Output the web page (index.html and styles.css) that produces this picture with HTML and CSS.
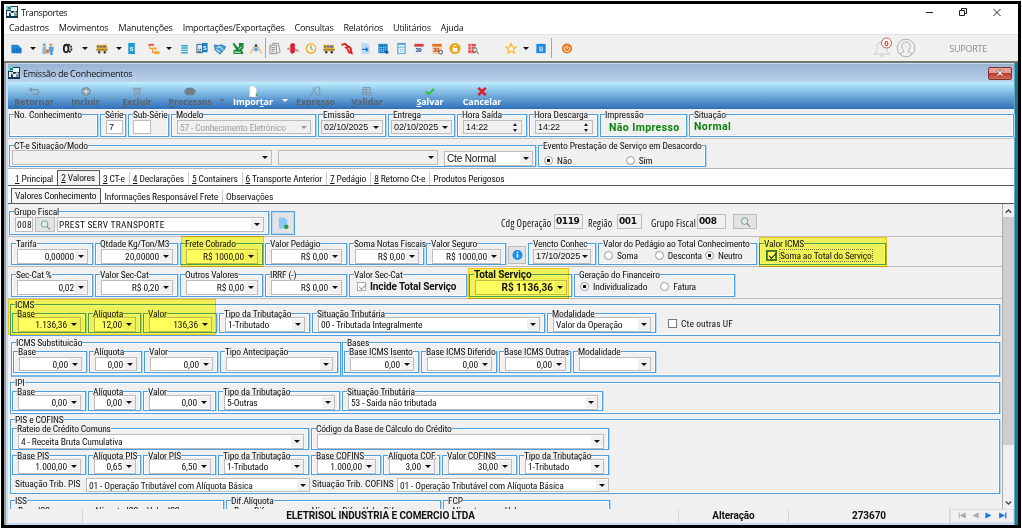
FILE: index.html
```
<!DOCTYPE html>
<html lang="pt-BR">
<head>
    <meta charset="UTF-8">
    <meta name="viewport" content="width=device-width, initial-scale=1.0">
    <title>Transportes</title>
    <link rel="stylesheet" href="styles.css">
</head>
<body>
<svg class="defs" width="0" height="0">
    <symbol id="app" viewBox="0 0 12 12"><path fill="#12394e" d="M0 0h12v12H0z"/><path fill="#7fc4ec" d="M0 0h5v4H0z"/><path fill="#e8f4fb" d="M5 1h6v4H5zM1 5h2v5H1zM5 7h3v3H5z"/><path fill="#1e8a5a" d="M2 1h3v2H2z"/><path stroke="#fff" fill="none" d="M1 10l3-5 2 5M8 10V6h2v4"/></symbol>
    <symbol id="bus" viewBox="0 0 14 14"><path fill="#f5a623" d="M1 3h11l1 4v3H1z"/><path fill="#2d6fb5" d="M2 4h2v2H2zM5 4h2v2H5zM8 4h3v2H8zM1 8h12v1H1z"/><circle cx="4" cy="11" r="1.3" fill="#333"/><circle cx="10" cy="11" r="1.3" fill="#333"/></symbol>
    <symbol id="lens" viewBox="0 0 12 12"><circle cx="5" cy="5" r="3.6" fill="#dfeaea" stroke="#7b9494"/><path d="M7.500 7.500l3.500 3.500" stroke="#7b9494" stroke-width="1.400"/></symbol>
</svg>
<div class="frame">
    <div class="titlebar">
        <svg class="app-icon"><use href="#app"/></svg>
        <span>Transportes</span>
        <svg class="win-buttons" viewBox="0 0 80 12" fill="none" stroke="#222">
            <path d="M6 6.500h7"/>
            <path d="M39.500 4.500h5v5h-5zM41.500 4.500v-2h5v5h-2"/>
            <path d="M73.500 3l7 7M80.500 3l-7 7"/>
        </svg>
    </div>
    <div class="menubar">
        <span>Cadastros</span><span>Movimentos</span><span>Manutenções</span><span>Importações/Exportações</span><span>Consultas</span><span>Relatórios</span><span>Utilitários</span><span>Ajuda</span>
    </div>
    <div class="toolbar">
        <svg viewBox="0 0 14 14"><path fill="#1f86d8" d="M2 3h7l4 4v5H2z"/><path stroke="#0e5ba3" d="M5 7v5M8 7v5M11 7v5"/></svg>
        <i class="arrow"></i>
        <svg class="people" viewBox="0 0 14 14"><circle cx="3" cy="3" r="1.700" fill="#8da5b5"/><circle cx="10" cy="3" r="1.700" fill="#e3a25b"/><path fill="#9bb6c8" d="M1 5h4v8H1z"/><path fill="#4fa0e0" d="M8 5h5v5h-1v4H9v-4H8z"/><path fill="#c77b3a" d="M5 8h3v4H5z"/></svg>
        <svg viewBox="0 0 14 14" fill="none" stroke="#222" stroke-width="2"><ellipse cx="5" cy="7" rx="2.500" ry="4"/><path d="M7 3c5 0 5 8 0 8" stroke-dasharray="2 1"/></svg>
        <i class="arrow"></i>
        <svg><use href="#bus"/></svg>
        <i class="arrow"></i>
        <svg class="book" viewBox="0 0 14 14"><path fill="#1c9ad6" d="M3 1h7v12H3z"/><text x="4.500" y="10" fill="#fff" class="tiny">S</text></svg>
        <svg viewBox="0 0 14 14"><path fill="#ef4b3a" d="M1 2h6v2H1z"/><path fill="#f5a623" d="M4 6h6v2H4zM7 10h6v3H7z"/><path stroke="#ef7b3a" fill="none" d="M2.500 4v3H4M5.500 8v3.500H7"/></svg>
        <i class="arrow short"></i>
        <svg viewBox="0 0 14 14" stroke="#2aa7c9"><path stroke-width="1.500" d="M4 4h7M4 6.500h7M4 9h7M4 11.500h7"/></svg>
        <svg viewBox="0 0 14 14"><path fill="#3c5f80" d="M1 2h7v10H1z"/><path fill="#d9e6ee" d="M2 3h5v8H2z"/><path stroke="#333" d="M3 8h1M5 8h1M3 10h3"/><path fill="#167fc2" d="M7 1h6v10H7z"/><text x="8" y="8.500" fill="#fff" class="tiny">S</text></svg>
        <svg viewBox="0 0 14 14" fill="none" stroke="#2c79b5"><path fill="#4ea0d8" d="M1 3l4 1 3-1 5 2-2 4-4 4-5-4z"/><path stroke="#fff" d="M4 6l3-1 4 4M3 8l4 3"/></svg>
        <svg viewBox="0 0 14 14"><path fill="#178a35" d="M1 2l2-1 3 4 2 1V1h5v6l-2 1 2 5H2V9l3-1z"/><path stroke="#fff" fill="none" d="M8 8l3-3M3 11h7"/></svg>
        <svg viewBox="0 0 14 14"><circle cx="7" cy="4" r="1.500" fill="#444"/><path fill="#6aaee0" d="M5 6h4v4H5z"/><path fill="none" stroke="#e79b4f" stroke-width="1.500" stroke-dasharray="2 1" d="M1 12l4-7M13 12L9 5"/></svg>
        <i class="sep"></i>
        <svg viewBox="0 0 14 14" fill="none" stroke="#8b8b8b"><path d="M4.500 3V1.500h6l2 9-3 1.500"/><path fill="#eee" d="M1.500 3.500h7v9h-7z"/><path d="M3 6h4M3 8h4M3 10h3"/></svg>
        <svg viewBox="0 0 14 14"><path fill="#d2222f" d="M6 1l3 1v9l-3 2-2-2V3z"/><path stroke="#de7b82" stroke-width="2" d="M1 8l4-2M9 8l4 2"/></svg>
        <svg viewBox="0 0 14 14"><circle cx="7" cy="7" r="5" fill="#fffbe8" stroke="#e8a91d" stroke-width="1.400"/><path d="M7 4v3l2 2" stroke="#555" fill="none"/></svg>
        <svg><use href="#bus"/></svg>
        <svg viewBox="0 0 14 14" fill="none" stroke="#dc1f1f" stroke-width="2"><path d="M1 3l4-1 3 3M6 6l3-1 2 2 1 5-3-1-1-3z"/></svg>
        <svg viewBox="0 0 14 14"><path fill="#b9dcf6" d="M3 1h6l3 3v9H3z"/><path fill="none" stroke="#1976c8" stroke-width="1.300" d="M4 8h6M8 6l2 2-2 2"/></svg>
        <svg viewBox="0 0 14 14"><path fill="#2084cf" d="M2 2h10v10H2z"/><path stroke="#bfe2fa" stroke-dasharray="1 1" d="M3 6h8M3 8h8M3 10h6"/><path stroke="#155a90" stroke-width="1.500" d="M9 11h4M11 9v4"/></svg>
        <svg viewBox="0 0 14 14"><path fill="#4b9ccc" d="M3 1h9v12H3z"/><path fill="#dff1fa" d="M4 3h7v2H4zM4 6h7v6H4z"/><path stroke="#7fb6d6" stroke-dasharray="1 1" d="M4 8h7M4 10h7"/></svg>
        <svg viewBox="0 0 14 14"><path fill="#ddeef8" d="M2 2h10v11H2z"/><path fill="#dc3b3b" d="M2 2h10v3H2z"/><text x="3.500" y="10.500" fill="#236" class="tiny">30</text></svg>
        <svg viewBox="0 0 14 14"><path fill="#f3cfa6" d="M2 2h10v11H2z"/><path fill="#e6722a" d="M2 2h10v3H2z"/><text x="3" y="10.500" fill="#b31" class="tiny">30</text><circle cx="11" cy="11" r="2" fill="#eee" stroke="#444"/></svg>
        <svg viewBox="0 0 14 14"><circle cx="7" cy="7" r="6" fill="#eaa61d"/><path fill="#fff" d="M4.500 6.500h5v4h-5z"/><path fill="none" stroke="#fff" d="M5.500 6.500v-2q1.500-2 3 0"/></svg>
        <svg viewBox="0 0 14 14"><path fill="#dd4a4a" d="M2 2h8v10H2z"/><path stroke="#f5c0c0" d="M2 5h8M2 8h8M5 2v10"/><circle cx="9" cy="8.500" r="2.200" fill="#ddd" stroke="#777"/><path stroke="#555" d="M11 10l2 3"/></svg>
        <svg class="star" viewBox="0 0 14 14"><path fill="none" stroke="#f6bd27" stroke-width="1.300" d="M7 1.500l1.600 3.700 4 .3-3 2.600 1 4L7 10l-3.600 2.100 1-4-3-2.600 4-.3z"/></svg>
        <i class="arrow short"></i>
        <svg viewBox="0 0 14 14"><path fill="#1e88e0" d="M2 2h10v10H2z"/><path fill="#bfe0fa" d="M5 5h4v5H5z"/><path stroke="#1e88e0" d="M7 5v4"/></svg>
        <i class="sep last"></i>
        <svg viewBox="0 0 14 14"><circle cx="7" cy="7" r="5.500" fill="#e8761a"/><path fill="none" stroke="#fff" d="M5 5a3 3 0 1 0 4 0M7 3.500v4"/></svg>
        <div class="user">
            <svg class="bell" viewBox="0 0 20 22" fill="none" stroke="#c9cdcf"><path d="M1 17c3-2 3-4 3-7 0-7 10-7 10 0 0 3 0 5 3 7zM7 17.500q2 4 4 0"/><circle cx="13.500" cy="6" r="5" fill="#fff" stroke="#e0503f"/><text x="11.300" y="8.900" class="count">0</text></svg>
            <svg class="avatar" viewBox="0 0 20 20" fill="none" stroke="#a5b4b4"><circle cx="10" cy="10" r="8.800"/><path d="M4 16c1-2 4-1 4-3-4-4-2-9 2-9s6 5 2 9c0 2 3 1 4 3"/></svg>
            <span>SUPORTE</span>
        </div>
    </div>

    <div class="window">
        <div class="window-title">
            <svg class="app-icon"><use href="#app"/></svg>
            <span>Emissão de Conhecimentos</span>
            <div class="close"><svg viewBox="0 0 8 8"><path d="M1.500 1.500l5 5M6.500 1.500l-5 5" stroke="#602020" stroke-width="2.600"/><path d="M1.500 1.500l5 5M6.500 1.500l-5 5" stroke="#fff" stroke-width="1.500"/></svg></div>
        </div>
        <div class="actions">
            <div class="action off"><svg viewBox="0 0 12 12" fill="none" stroke="#8296a3" stroke-width="1.500"><path d="M4 2L1.500 4 4 6M2 4h7q2 0 2 2.500T9 9H4"/></svg><span><u>R</u>etornar</span></div>
            <div class="action off"><svg viewBox="0 0 12 12"><circle cx="6" cy="6" r="5" fill="#8296a3"/><path stroke="#d3e4ed" stroke-width="1.500" d="M3 6h6M6 3v6"/></svg><span><u>I</u>ncluir</span></div>
            <div class="action off"><svg viewBox="0 0 12 12" fill="none" stroke="#8296a3"><path d="M1 2.500h10M2.500 4l1 7h5l1-7zM4 5l4 5M8 5l-4 5"/></svg><span><u>E</u>xcluir</span></div>
            <div class="action off"><svg viewBox="0 0 12 12"><path fill="#71808a" d="M3 2h6l3 3v3l-3 2H3L0 8V5z"/></svg><span><u>P</u>rocessos</span></div>
            <i class="arrow grey"></i>
            <div class="action"><svg viewBox="0 0 12 12"><path fill="#fff" stroke="#aac" stroke-width=".5" d="M2 0h5l3 3v9H2z"/><path fill="#55a868" d="M9 8h2v3H9z"/></svg><span>Impor<u>t</u>ar</span></div>
            <i class="arrow white"></i>
            <div class="action off"><svg viewBox="0 0 12 12" fill="none" stroke="#8296a3"><circle cx="4" cy="3" r="1.500"/><path d="M1 11l1-5h3l3 5M6 1h4v9H8"/></svg><span>Expre<u>s</u>so</span></div>
            <div class="action off"><svg viewBox="0 0 12 12" fill="none" stroke="#8296a3"><path d="M1.500 1.500h8v8h-8zM1.500 4h8M1.500 7h8M5 1.500v8M7 9l2 2 3-4"/></svg><span><u>V</u>alidar</span></div>
            <div class="action save"><svg viewBox="0 0 12 12" fill="none" stroke="#2fc42c" stroke-width="2"><path d="M1.500 6l3 3L10.500 3"/></svg><span><u>S</u>alvar</span></div>
            <div class="action"><svg viewBox="0 0 12 12" fill="none" stroke="#d8202c" stroke-width="2.800"><path d="M2 2l8 8M10 2l-8 8"/></svg><span>Cancelar</span></div>
        </div>

        <div class="row header-row">
            <div class="box"><label>No. Conhecimento</label></div>
            <div class="box"><label>Série</label><div class="field white wide serie">7</div></div>
            <div class="box"><label>Sub-Série</label><div class="field white sub"></div></div>
            <div class="box"><label>Modelo</label><div class="field disabled">57 - Conhecimento Eletrônico<i class="drop"></i></div></div>
            <div class="box"><label>Emissão</label><div class="field wide">02/10/2025<i class="drop"></i></div></div>
            <div class="box"><label>Entrega</label><div class="field wide">02/10/2025<i class="drop"></i></div></div>
            <div class="box"><label>Hora Saída</label><div class="field wide time">14:22<i class="spin"></i></div></div>
            <div class="box"><label>Hora Descarga</label><div class="field wide time">14:22<i class="spin"></i></div></div>
            <div class="box"><label>Impressão</label><b class="green shift">Não Impresso</b></div>
            <div class="box"><label>Situação</label><b class="green">Normal</b></div>
        </div>
        <div class="row mode-row">
            <div class="box"><label>CT-e Situação/Modo</label>
                <div class="mode-fields">
                    <div class="field"><i class="drop"></i></div>
                    <div class="field"><i class="drop"></i></div>
                    <div class="field white big">Cte Normal<i class="drop"></i></div>
                </div>
            </div>
            <div class="box"><label>Evento Prestação de Serviço em Desacordo</label>
                <div class="radios event"><span><i class="radio on"></i>Não</span><span><i class="radio"></i>Sim</span></div>
            </div>
        </div>

        <div class="tabs">
            <span><u>1</u> Principal</span><span class="active"><u>2</u> Valores</span><span><u>3</u> CT-e</span><span><u>4</u> Declarações</span><span><u>5</u> Containers</span><span><u>6</u> Transporte Anterior</span><span><u>7</u> Pedágio</span><span><u>8</u> Retorno Ct-e</span><span>Produtos Perigosos</span>
        </div>
        <div class="tabs subtabs">
            <span class="active">Valores Conhecimento</span><span>Informações Responsável Frete</span><span>Observações</span>
        </div>

        <div class="body">
            <div class="panel">
                <div class="fiscal">
                    <div class="box"><label>Grupo Fiscal</label>
                        <div class="fiscal-fields">
                            <div class="field white">008</div>
                            <div class="btn"><svg viewBox="0 0 12 12"><use href="#lens"/></svg></div>
                            <div class="field white">PREST SERV TRANSPORTE<i class="drop"></i></div>
                        </div>
                    </div>
                    <div class="btn doc"><svg viewBox="0 0 12 14"><path fill="#8cc8f2" d="M1 1h6l3 3v9H1z"/><circle cx="9" cy="11" r="2.500" fill="#2e9e56"/></svg></div>
                    <span>Cdg Operação</span><b>0119</b>
                    <span>Região</span><b>001</b>
                    <span>Grupo Fiscal</span><b>008</b>
                    <div class="btn find"><svg viewBox="0 0 12 12"><use href="#lens"/></svg></div>
                </div>

                <div class="row values">
                    <div class="box"><label>Tarifa</label><div class="field num">0,00000<i class="drop"></i></div></div>
                    <div class="box"><label>Qtdade Kg/Ton/M3</label><div class="field num">20,00000<i class="drop"></i></div></div>
                    <div class="box"><label>Frete Cobrado</label><div class="field num">R$ 1000,00<i class="drop"></i></div></div>
                    <div class="box"><label>Valor Pedágio</label><div class="field num">R$ 0,00<i class="drop"></i></div></div>
                    <div class="box"><label>Soma Notas Fiscais</label><div class="field num">R$ 0,00<i class="drop"></i></div></div>
                    <div class="box"><label>Valor Seguro</label><div class="field num">R$ 1000,00<i class="drop"></i></div></div>
                    <div class="btn info"><svg viewBox="0 0 12 12"><circle cx="6" cy="6" r="5.500" fill="#1e90e8"/><path stroke="#fff" stroke-width="1.600" d="M6 2.500v1.500M6 5v4"/></svg></div>
                    <div class="box"><label>Vencto Conhec</label><div class="field wide">17/10/2025<i class="drop"></i></div></div>
                    <div class="box"><label>Valor do Pedágio ao Total Conhecimento</label>
                        <div class="radios toll"><span><i class="radio"></i>Soma</span><span><i class="radio"></i>Desconta</span><span><i class="radio on"></i>Neutro</span></div>
                    </div>
                    <div class="box"><label>Valor ICMS</label>
                        <div class="radios"><span><i class="check on"></i><em>Soma ao Total do Serviço</em></span></div>
                    </div>
                </div>
                <div class="row values second">
                    <div class="box"><label>Sec-Cat %</label><div class="field num">0,02<i class="drop"></i></div></div>
                    <div class="box"><label>Valor Sec-Cat</label><div class="field num">R$ 0,20<i class="drop"></i></div></div>
                    <div class="box"><label>Outros Valores</label><div class="field num">R$ 0,00<i class="drop"></i></div></div>
                    <div class="box"><label>IRRF (-)</label><div class="field num">R$ 0,00<i class="drop"></i></div></div>
                    <div class="box"><label>Valor Sec-Cat</label>
                        <div class="radios"><span><i class="check dim"></i><b>Incide Total Serviço</b></span></div>
                    </div>
                    <div class="box strong"><label>Total Serviço</label><div class="field num">R$ 1136,36<i class="drop"></i></div></div>
                    <div class="box"><label>Geração do Financeiro</label>
                        <div class="radios finance"><span><i class="radio on"></i>Individualizado</span><span><i class="radio"></i>Fatura</span></div>
                    </div>
                </div>

                <div class="group icms"><label>ICMS</label>
                    <div class="row">
                        <div class="box"><label>Base</label><div class="field num">1.136,36<i class="drop"></i></div></div>
                        <div class="box"><label>Alíquota</label><div class="field num">12,00<i class="drop"></i></div></div>
                        <div class="box"><label>Valor</label><div class="field num">136,36<i class="drop"></i></div></div>
                        <div class="box"><label>Tipo da Tributação</label><div class="field white">1-Tributado<i class="drop"></i></div></div>
                        <div class="box"><label>Situação Tributária</label><div class="field white">00 - Tributada Integralmente<i class="drop"></i></div></div>
                        <div class="box"><label>Modalidade</label><div class="field white">Valor da Operação<i class="drop"></i></div></div>
                        <span class="uf"><i class="check"></i>Cte outras UF</span>
                    </div>
                </div>

                <div class="subst-row">
                    <div class="group subst"><label>ICMS Substituicão</label>
                        <div class="row">
                            <div class="box"><label>Base</label><div class="field num">0,00<i class="drop"></i></div></div>
                            <div class="box"><label>Alíquota</label><div class="field num">0,00<i class="drop"></i></div></div>
                            <div class="box"><label>Valor</label><div class="field num">0,00<i class="drop"></i></div></div>
                            <div class="box"><label>Tipo Antecipação</label><div class="field white"><i class="drop"></i></div></div>
                        </div>
                    </div>
                    <div class="group bases"><label>Bases</label>
                        <div class="row">
                            <div class="box"><label>Base ICMS Isento</label><div class="field num">0,00<i class="drop"></i></div></div>
                            <div class="box"><label>Base ICMS Diferido</label><div class="field num">0,00<i class="drop"></i></div></div>
                            <div class="box"><label>Base ICMS Outras</label><div class="field num">0,00<i class="drop"></i></div></div>
                            <div class="box"><label>Modalidade</label><div class="field white"><i class="drop"></i></div></div>
                        </div>
                    </div>
                </div>

                <div class="group ipi"><label>IPI</label>
                    <div class="row">
                        <div class="box"><label>Base</label><div class="field num">0,00<i class="drop"></i></div></div>
                        <div class="box"><label>Alíquota</label><div class="field num">0,00<i class="drop"></i></div></div>
                        <div class="box"><label>Valor</label><div class="field num">0,00<i class="drop"></i></div></div>
                        <div class="box"><label>Tipo da Tributação</label><div class="field white">5-Outras<i class="drop"></i></div></div>
                        <div class="box"><label>Situação Tributária</label><div class="field white">53 - Saida não tributada<i class="drop"></i></div></div>
                    </div>
                </div>

                <div class="group pis"><label>PIS e COFINS</label>
                    <div class="row credit">
                        <div class="box"><label>Rateio de Crédito Comuns</label><div class="field white">4 - Receita Bruta Cumulativa<i class="drop"></i></div></div>
                        <div class="box"><label>Código da Base de Cálculo do Crédito</label><div class="field white"><i class="drop"></i></div></div>
                    </div>
                    <div class="row rates">
                        <div class="box"><label>Base PIS</label><div class="field num">1.000,00<i class="drop"></i></div></div>
                        <div class="box"><label>Alíquota PIS</label><div class="field num">0,65<i class="drop"></i></div></div>
                        <div class="box"><label>Valor PIS</label><div class="field num">6,50<i class="drop"></i></div></div>
                        <div class="box"><label>Tipo da Tributação</label><div class="field white">1-Tributado<i class="drop"></i></div></div>
                        <div class="box"><label>Base COFINS</label><div class="field num">1.000,00<i class="drop"></i></div></div>
                        <div class="box"><label>Alíquota COF.</label><div class="field num">3,00<i class="drop"></i></div></div>
                        <div class="box"><label>Valor COFINS</label><div class="field num">30,00<i class="drop"></i></div></div>
                        <div class="box"><label>Tipo da Tributação</label><div class="field white">1-Tributado<i class="drop"></i></div></div>
                    </div>
                    <div class="situations">
                        <span>Situação Trib. PIS</span>
                        <div class="field white">01 - Operação Tributável com Alíquota Básica<i class="drop"></i></div>
                        <span>Situação Trib. COFINS</span>
                        <div class="field white">01 - Operação Tributável com Alíquota Básica<i class="drop"></i></div>
                    </div>
                </div>

                <div class="last-row">
                    <div class="group"><label>ISS</label><div class="cut"><span>Base ISS</span><span>Alíquota ISS</span><span>Valor ISS</span></div></div>
                    <div class="group"><label>Dif.Alíquota</label><div class="cut"><span>Base Dif.</span><span>Alíquota Dif.</span><span>Valor Dif.</span></div></div>
                    <div class="group"><label>FCP</label><div class="cut two"><span>Alíquota</span><span>Valor</span></div></div>
                </div>

                <div class="mark mark-frete"></div>
                <div class="mark mark-soma"></div>
                <div class="mark mark-total"></div>
                <div class="mark mark-icms"></div>
            </div>
            <div class="scrollbar">
                <svg viewBox="0 0 10 12"><path d="M2.500 8L5 5.500 7.500 8" fill="none" stroke="#444" stroke-width="1.300"/></svg>
                <div class="thumb"></div>
                <svg viewBox="0 0 10 12"><path d="M2.500 5L5 7.500 7.500 5" fill="none" stroke="#444" stroke-width="1.300"/></svg>
            </div>
        </div>
        <div class="status">
            <span></span><span>ELETRISOL INDUSTRIA E COMERCIO LTDA</span><span>Alteração</span><span>273670</span>
            <svg viewBox="0 0 64 14"><path fill="#a9a9a9" d="M5 3h1v7H5zM13 3v7L6 6.500zM28 3v7l-7-3.500z"/><path fill="#1473e6" d="M36 3v7l7-3.500zM52 3v7l7-3.500zM59 3h1.500v7H59z"/></svg>
        </div>
    </div>
</div>
</body>
</html>
```
FILE: styles.css
```
* {
    box-sizing: border-box;
}
body {
    margin: 0;
    padding: 1px;
    background: #fff;
    color: #111;
    font: 9.5px/11px Roboto, "Liberation Sans", sans-serif;
    font-stretch: 75%;
    letter-spacing: -.15px;
    white-space: nowrap;
    overflow: hidden;
}
i, em {
    font-style: normal;
}
.defs {
    position: absolute;
}
.tiny {
    font: bold 6px "Liberation Sans", sans-serif;
    stroke: none;
}
.frame {
    width: 1020px;
    height: 527px;
    border: 3px solid #000;
    background: #fff;
}

/* main window */
.titlebar, .menubar, .window-title, .toolbar {
    display: flex;
    align-items: center;
    font-family: "Open Sans", sans-serif;
    font-stretch: 88%;
    font-size: 9px;
    letter-spacing: -.25px;
}
.titlebar {
    height: 16px;
    padding: 0 14px 0 2px;
    letter-spacing: -.4px;
}
.app-icon {
    width: 12px;
    height: 12px;
    margin-right: 3px;
}
.win-buttons {
    width: 80px;
    height: 12px;
    margin-left: auto;
    overflow: visible;
    margin-right: 4px;
}
.menubar {
    height: 14px;
    padding-left: 5px;
    gap: 10px;
}
.toolbar {
    height: 27px;
    padding: 0 31px 0 3px;
    background: #f0f0f0;
    border-top: 1px solid #e2e2e2;
}
.toolbar > svg {
    width: 18px;
    height: 13px;
    flex: none;
}
.toolbar .people {
    margin-left: -2px;
    margin-right: 2px;
}
.toolbar .book {
    margin-left: -4px;
    margin-right: 4px;
}
.toolbar .star {
    margin-left: 20px;
}
.arrow {
    width: 16px;
    flex: none;
    display: flex;
    justify-content: center;
}
.arrow::after, .drop::after {
    content: "";
    border: 3px solid transparent;
    border-top: 3px solid #111;
    border-bottom: 0;
}
.arrow.short {
    width: 12px;
}
.arrow.grey::after {
    border-top-color: #5d7387;
}
.arrow.white::after {
    border-top-color: #fff;
}
.sep {
    width: 1px;
    height: 20px;
    background: #a5a5a5;
}
.sep.last {
    margin: 0 6px 0 1px;
}
.user {
    display: flex;
    align-items: center;
    margin-left: auto;
    color: #8c9094;
}
.bell {
    width: 20px;
    height: 22px;
    margin-right: 3px;
}
.avatar {
    width: 20px;
    height: 20px;
    margin-right: 33px;
}
.count {
    font: bold 8px "Liberation Sans", sans-serif;
    fill: #e0202c;
    stroke: none;
}

/* child window */
.window {
    height: 464px;
    padding: 1px 4px 0 4px;
    border-top: 2px solid #77746c;
    background: linear-gradient(90deg, #9a9a9a 2px, #c6dcf2 2px, #c6dcf2 99.6%, #157b95 99.7%);
}
.window-title {
    height: 18px;
    padding-right: 2px;
    background: linear-gradient(#98b3d2, #bcd2ed);
}
.close {
    width: 24px;
    height: 13px;
    margin-left: auto;
    display: flex;
    align-items: center;
    justify-content: center;
    border: 1px solid #7c2f2c;
    border-radius: 2px;
    background: linear-gradient(#e3a092 45%, #bf3a25 50%, #d4705a);
}
.close svg {
    width: 8px;
    height: 8px;
}
.actions {
    display: grid;
    grid-template-columns: 52px 51px 52px 54px 10px 52px 11px 51px 52px 63px 52px;
    height: 27px;
    padding-top: 2px;
    align-items: center;
    background: linear-gradient(#bff0ff, #7fb9e2 40%, #2f6fb9);
}
.actions .arrow {
    width: auto;
    padding-top: 8px;
}
.action {
    display: flex;
    flex-direction: column;
    align-items: center;
    color: #fff;
    font: bold 9px/10px "Open Sans", sans-serif;
    font-stretch: 97%;
    letter-spacing: -.1px;
}
.action svg {
    width: 12px;
    height: 11px;
}
.action.off {
    color: #56626e;
}
.action.save {
    padding-left: 11px;
}

/* bordered boxes with a caption on the top line */
.row {
    display: grid;
    column-gap: 2px;
}
.box, .group {
    border: 1px solid #4d9fdf;
    box-shadow: inset 0 0 0 1px #f8fbff, 1px 0 0 #b4d8f4;
}
.box > label, .group > label {
    display: block;
    width: fit-content;
    height: 9px;
    line-height: 9px;
    margin: -5px 0 0 4px;
    background: #f0f0f0;
}
.field {
    display: flex;
    align-items: center;
    height: 15px;
    margin: 1px 4px 0 5px;
    padding-left: 2px;
    border: 1px solid #bcbcbc;
    background: #f0f0f0;
}
.field.white, .field.num {
    background: #fff;
}
.field.num {
    justify-content: flex-end;
    letter-spacing: -.1px;
}
.field.wide {
    margin: 1px 2px 0 2px;
    font-family: "Liberation Sans", sans-serif;
    font-size: 9px;
    letter-spacing: -.1px;
}
.num .drop {
    margin-left: 1px;
}
.drop {
    display: flex;
    align-items: center;
    justify-content: center;
    width: 12px;
    height: 11px;
    margin-left: auto;
    background: #f0f0f0;
}
.disabled {
    color: #a0a0a0;
}
.disabled .drop::after {
    border-top-color: #999;
}
.spin {
    margin: 0 4px 0 auto;
}
.spin::before, .spin::after {
    content: "";
    display: block;
    border: 2px solid transparent;
    border-bottom: 3px solid #222;
    border-top: 0;
}
.spin::after {
    margin-top: 3px;
    border-top: 3px solid #222;
    border-bottom: 0;
}
.header-row {
    height: 30px;
    padding: 5px 0 1px 1px;
    grid-template-columns: 89px 26px 41px 145px 68px 67px 70px 69px 87px 1fr;
    background: #f0f0f0;
    border-bottom: 1px solid #c4c4c4;
}
.header-row label, .mode-row label {
    letter-spacing: -.1px;
}
.header-row .field {
    height: 14px;
}
.header-row .serie {
    margin-left: 5px;
}
.header-row .sub {
    width: 18px;
    margin-left: 4px;
}
.field.time {
    margin-left: 5px;
    margin-right: 4px;
}
.green {
    display: block;
    margin: 2px 0 0 4px;
    color: #0a840a;
    font-size: 10.5px;
    font-stretch: 100%;
    letter-spacing: .4px;
}
.green.shift {
    margin: 3px 0 0 8px;
}
.mode-row {
    height: 30px;
    padding: 6px 0 1px 1px;
    grid-template-columns: 527px 168px;
    background: #f0f0f0;
    border-bottom: 1px solid #b4b4b4;
}
.mode-fields {
    display: grid;
    grid-template-columns: 260px 160px 89px;
    column-gap: 6px;
    padding-left: 2px;
}
.mode-fields .field {
    margin: 0;
}
.mode-fields .big {
    margin-top: 1px;
    font: 10px "Liberation Sans", sans-serif;
}
.radios {
    display: flex;
    align-items: center;
    height: 15px;
    padding-left: 7px;
}
.radios span, .uf {
    display: flex;
    align-items: center;
    gap: 4px;
}
.event {
    padding-left: 5px;
    padding-top: 5px;
    gap: 54px;
}
.radio {
    width: 9px;
    height: 9px;
    border: 1px solid #9a9a9a;
    border-radius: 50%;
    background: #fff;
}
.radio.on {
    background: radial-gradient(#111 0 1.5px, #fff 2px);
}
.check {
    width: 9px;
    height: 9px;
    border: 1px solid #777;
    background: #fff;
}
.check.on::after, .check.dim::after {
    content: "";
    display: block;
    width: 6px;
    height: 3px;
    margin: 1px 0 0 1px;
    border-left: 1.5px solid #111;
    border-bottom: 1.5px solid #111;
    transform: rotate(-45deg);
}
.check.on {
    outline: 1px solid #2f7d55;
}
.check.dim {
    border-color: #aaa;
}
.check.dim::after {
    border-color: #999;
}
.radios em {
    outline: 1px dotted #777;
}

/* tabs */
.tabs {
    display: flex;
    align-items: flex-end;
    height: 17px;
    padding-left: 4px;
    background: #fff;
    border-bottom: 1px solid #555;
}
.tabs span {
    height: 13px;
    padding: 0 4px 0 3px;
    border-right: 1px solid #ccc;
    line-height: 13px;
}
.tabs span:last-child {
    border-right: 0;
}
.tabs .active {
    height: 15px;
    margin-left: -1px;
    border: 1px solid #555;
    border-bottom: 0;
    background: #f4f4f4;
    line-height: 14px;
}
.subtabs {
    height: 18px;
}

/* scrolling form */
.body {
    display: flex;
    height: 305px;
}
.panel {
    position: relative;
    width: 995px;
    height: 305px;
    overflow: hidden;
    background: #f0f0f0;
    border-right: 1px solid #aaa;
}
.fiscal {
    display: flex;
    height: 33px;
    padding: 7px 0 0 1px;
    border-bottom: 1px solid #bdbdbd;
}
.fiscal .box {
    width: 260px;
    height: 24px;
}
.fiscal-fields {
    display: grid;
    grid-template-columns: 18px 20px 1fr;
    column-gap: 2px;
    padding: 1px 4px 0 5px;
}
.fiscal-fields .field {
    margin: 0;
    padding-left: 1px;
    letter-spacing: .25px;
}
.btn {
    display: flex;
    align-items: center;
    justify-content: center;
    border: 1px solid #bdbdbd;
    background: #e3e3e3;
}
.btn svg {
    width: 11px;
    height: 12px;
}
.btn.doc {
    width: 24px;
    height: 24px;
    margin: 0 206px 0 2px;
    border-color: #4d9fdf;
    outline: 1px solid #b4d8f4;
    outline-offset: -2px;
}
.btn.doc svg {
    height: 14px;
}
.fiscal > span {
    width: 51px;
    font: 10px/24px "Open Sans", sans-serif;
    font-stretch: 75%;
    letter-spacing: .2px;
}
.fiscal > span:nth-of-type(2) {
    width: 26px;
}
.fiscal > span:nth-of-type(3) {
    width: 45px;
}
.fiscal > b {
    width: 29px;
    height: 15px;
    margin: 3px 5px 0 2px;
    padding-left: 1px;
    border: 1px solid #bdbdbd;
    font: bold 9px/12px "DejaVu Sans", sans-serif;
    letter-spacing: -.4px;
}
.fiscal > b:nth-of-type(2) {
    width: 25px;
    margin: 3px 9px 0 3px;
}
.fiscal > b:nth-of-type(3) {
    margin-right: 7px;
    margin-left: 1px;
}
.btn.find {
    width: 24px;
    height: 15px;
    margin-top: 3px;
}
.values {
    height: 30px;
    padding: 6px 0 1px 3px;
    grid-template-columns: 82px 83px 83px 82px 75px 80px 18px 68px 159px 127px;
    border-bottom: 1px solid #bdbdbd;
}
.values .field.wide {
    margin-left: 4px;
    margin-right: 4px;
}
.values.second {
    height: 32px;
    padding: 7px 0 1px 3px;
    grid-template-columns: 82px 83px 83px 82px 118px 103px 161px;
}
.btn.info {
    height: 18px;
    margin-top: 3px;
}
.toll {
    padding-left: 5px;
    gap: 17px;
}
.toll span:last-child {
    margin-left: -14px;
}
.finance {
    padding-left: 5px;
    gap: 13px;
}
.radios b, .strong {
    font-weight: bold;
    font-size: 10px;
    font-stretch: 92%;
    letter-spacing: -.1px;
}
.strong .field.num {
    letter-spacing: 0;
}
.group > .row .field {
    margin-top: -1px;
}
.group > .row {
    margin: 4px 0 0 1px;
    grid-auto-rows: 20px;
}
.icms, .ipi {
    height: 32px;
    margin: 5px 2px 0 2px;
}
.icms > .row {
    grid-template-columns: 74px 53px 74px 91px 233px 109px auto;
}
.uf {
    padding-left: 10px;
    letter-spacing: .1px;
}
.subst-row {
    display: flex;
    gap: 1px;
    margin: 6px 2px 0 3px;
}
.subst, .bases {
    height: 35px;
    border-bottom: 2px solid #7db8e6;
}
.subst {
    width: 330px;
}
.bases {
    flex: 1;
}
.group.subst > .row, .group.bases > .row {
    grid-auto-rows: 22px;
}
.subst > .row {
    grid-template-columns: 74px 53px 74px 118px;
}
.subst .field, .bases .field {
    height: 14px;
}
.group.subst > .row .field, .group.bases > .row .field {
    margin-top: 1px;
}
.bases > .row {
    grid-template-columns: 75px 76px 72px 83px;
}
.ipi > .row {
    grid-template-columns: 74px 53px 73px 122px 261px;
}
.pis {
    height: 75px;
    margin: 5px 2px 0 2px;
}
.group > .credit {
    grid-template-columns: 297px 298px;
    grid-auto-rows: 22px;
}
.group > .credit .field {
    margin-top: 1px;
}
.group > .rates {
    margin-top: 5px;
    grid-template-columns: 74px 53px 73px 91px 70px 57px 75px 90px;
}
.situations {
    display: grid;
    grid-template-columns: 69px 224px 83px 212px;
    column-gap: 2px;
    padding: 3px 0 0 4px;
}
.situations .field {
    height: 14px;
    margin: 0;
}
.situations span {
    letter-spacing: -.05px;
}
.last-row {
    display: grid;
    grid-template-columns: 214px 215px 167px;
    column-gap: 2px;
    height: 30px;
    margin: 6px 0 0 2px;
}
.cut {
    display: grid;
    grid-template-columns: 76px 53px auto;
    padding: 0 0 0 7px;
}
.cut.two {
    grid-template-columns: 54px auto;
}

/* yellow marker over the highlighted fields */
.mark {
    position: absolute;
    background: #ffff5e;
    border: 1px solid #ffd21a;
    mix-blend-mode: multiply;
}
.mark-frete {
    left: 173px;
    top: 32px;
    width: 83px;
    height: 31px;
}
.mark-soma {
    left: 751px;
    top: 33px;
    width: 128px;
    height: 30px;
}
.mark-total {
    left: 460px;
    top: 64px;
    width: 101px;
    height: 31px;
}
.mark-icms {
    left: 0;
    top: 95px;
    width: 208px;
    height: 36px;
}
.scrollbar {
    display: flex;
    flex-direction: column;
    justify-content: space-between;
    width: 11px;
    background: #f0f0f0;
}
.scrollbar svg {
    width: 11px;
    height: 13px;
}
.thumb {
    height: 228px;
    margin-bottom: auto;
    background: #cdcdcd;
}

.status {
    display: grid;
    grid-template-columns: 75px 596px 110px 161px 64px;
    height: 14px;
    background: #f0f0f0;
    font-weight: bold;
    font-size: 10px;
    letter-spacing: -.1px;
    font-stretch: 95%;
    text-align: center;
    line-height: 14px;
}
.status span {
    border-right: 1px solid #d8d8d8;
}
.status svg {
    width: 64px;
    height: 14px;
    border: 1px solid #ddd;
}
```
